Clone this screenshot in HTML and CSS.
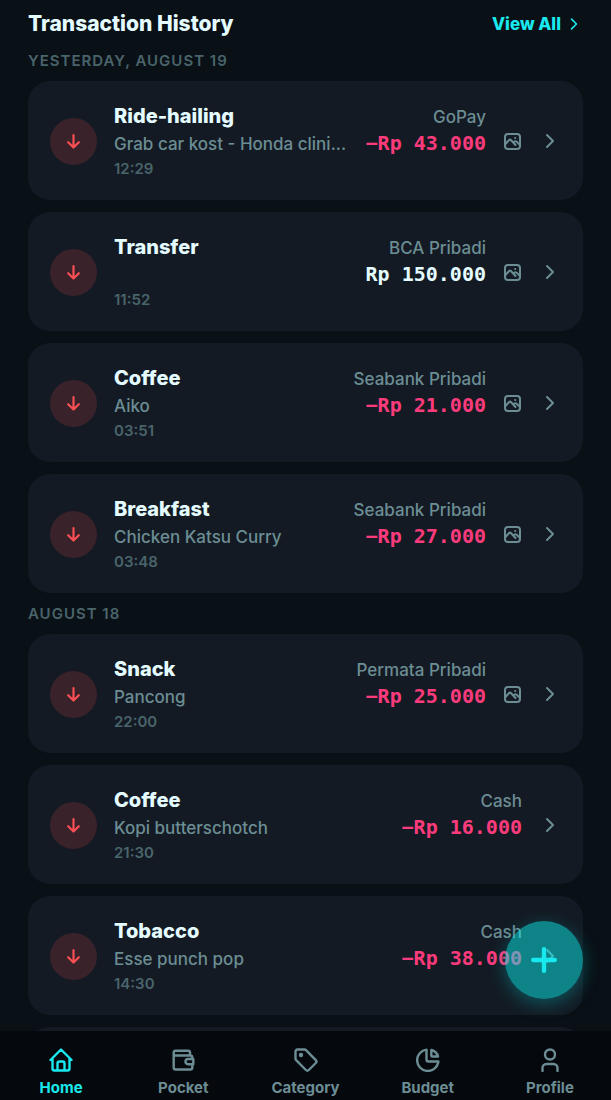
FILE: index.html
```html
<!DOCTYPE html>
<html lang="en">
<head>
  <meta charset="UTF-8" />
  <meta name="viewport" content="width=device-width, initial-scale=1.0"/>
  <title>Transaction History</title>
  <link rel="stylesheet" href="styles.css">
</head>
<body>
  <!-- Shared icons -->
  <svg class="sprite" aria-hidden="true">
    <symbol id="arrow-down" viewBox="0 0 24 24"><path d="M12 3v17M4.500 13l7.500 7.500 7.500-7.500"/></symbol>
    <symbol id="chevron" viewBox="0 0 22 22"><path d="M8 5l6 6-6 6"/></symbol>
    <symbol id="picture" viewBox="0 0 19 19">
      <rect x="2" y="2" width="15" height="15" rx="3"/>
      <path d="M2.500 12l3.600-4c.6-.6 1.200-.6 1.800 0l4.600 5M10.500 10.600l1.100-1c.6-.5 1.200-.5 1.800 0l3.100 2.900"/>
      <circle class="dot" cx="12.200" cy="6" r="1.100"/>
    </symbol>
  </svg>

  <div class="app">
    <main class="content">
      <header class="page-header">
        <h1>Transaction History</h1>
        <a class="view-all" href="#all">View All <svg><use href="#chevron"/></svg></a>
      </header>

      <section>
        <h2 class="date">Yesterday, August 19</h2>
        <ul class="list">
          <li>
            <a class="card" href="#ride-hailing">
              <span class="badge"><svg><use href="#arrow-down"/></svg></span>
              <span class="info">
                <span class="name">Ride-hailing</span>
                <span class="note">Grab car kost - Honda clini...</span>
                <span class="time">12:29</span>
              </span>
              <span class="payment">
                <span class="account">GoPay</span>
                <span class="amount expense">−Rp 43.000</span>
              </span>
              <svg class="picture"><use href="#picture"/></svg>
              <svg class="chevron"><use href="#chevron"/></svg>
            </a>
          </li>
          <li>
            <a class="card" href="#transfer">
              <span class="badge"><svg><use href="#arrow-down"/></svg></span>
              <span class="info">
                <span class="name">Transfer</span>
                <span class="note"></span>
                <span class="time">11:52</span>
              </span>
              <span class="payment">
                <span class="account">BCA Pribadi</span>
                <span class="amount">Rp 150.000</span>
              </span>
              <svg class="picture"><use href="#picture"/></svg>
              <svg class="chevron"><use href="#chevron"/></svg>
            </a>
          </li>
          <li>
            <a class="card" href="#coffee-aiko">
              <span class="badge"><svg><use href="#arrow-down"/></svg></span>
              <span class="info">
                <span class="name">Coffee</span>
                <span class="note">Aiko</span>
                <span class="time">03:51</span>
              </span>
              <span class="payment">
                <span class="account">Seabank Pribadi</span>
                <span class="amount expense">−Rp 21.000</span>
              </span>
              <svg class="picture"><use href="#picture"/></svg>
              <svg class="chevron"><use href="#chevron"/></svg>
            </a>
          </li>
          <li>
            <a class="card" href="#breakfast">
              <span class="badge"><svg><use href="#arrow-down"/></svg></span>
              <span class="info">
                <span class="name">Breakfast</span>
                <span class="note">Chicken Katsu Curry</span>
                <span class="time">03:48</span>
              </span>
              <span class="payment">
                <span class="account">Seabank Pribadi</span>
                <span class="amount expense">−Rp 27.000</span>
              </span>
              <svg class="picture"><use href="#picture"/></svg>
              <svg class="chevron"><use href="#chevron"/></svg>
            </a>
          </li>
        </ul>
      </section>

      <section>
        <h2 class="date">August 18</h2>
        <ul class="list">
          <li>
            <a class="card" href="#snack">
              <span class="badge"><svg><use href="#arrow-down"/></svg></span>
              <span class="info">
                <span class="name">Snack</span>
                <span class="note">Pancong</span>
                <span class="time">22:00</span>
              </span>
              <span class="payment">
                <span class="account">Permata Pribadi</span>
                <span class="amount expense">−Rp 25.000</span>
              </span>
              <svg class="picture"><use href="#picture"/></svg>
              <svg class="chevron"><use href="#chevron"/></svg>
            </a>
          </li>
          <li>
            <a class="card" href="#coffee-kopi">
              <span class="badge"><svg><use href="#arrow-down"/></svg></span>
              <span class="info">
                <span class="name">Coffee</span>
                <span class="note">Kopi butterschotch</span>
                <span class="time">21:30</span>
              </span>
              <span class="payment">
                <span class="account">Cash</span>
                <span class="amount expense">−Rp 16.000</span>
              </span>
              <svg class="chevron"><use href="#chevron"/></svg>
            </a>
          </li>
          <li>
            <a class="card" href="#tobacco">
              <span class="badge"><svg><use href="#arrow-down"/></svg></span>
              <span class="info">
                <span class="name">Tobacco</span>
                <span class="note">Esse punch pop</span>
                <span class="time">14:30</span>
              </span>
              <span class="payment">
                <span class="account">Cash</span>
                <span class="amount expense">−Rp 38.000</span>
              </span>
              <svg class="chevron"><use href="#chevron"/></svg>
            </a>
          </li>
          <li class="card placeholder" aria-hidden="true"></li>
        </ul>
      </section>
    </main>

    <button class="fab" type="button" aria-label="Add transaction">
      <svg viewBox="0 0 24 24"><path d="M12 2v20M2 12h20"/></svg>
    </button>

    <nav class="tabs">
      <a class="tab active" href="#home">
        <svg viewBox="0 0 24 24"><path d="M1.500 12L12 1.500 22.500 12M3.500 10.500V20.500c0 1.200.8 2 2 2h13c1.200 0 2-.8 2-2V10.500M8.500 22.500v-7c0-1.100.9-2 2-2h3c1.100 0 2 .9 2 2v7"/></svg>
        Home
      </a>
      <a class="tab" href="#pocket">
        <svg viewBox="0 0 24 24"><path d="M19 7.500V4.500c0-1-.8-1.800-1.800-1.800H4.500c-1 0-1.800.8-1.800 1.800v15c0 1.100.9 2 2 2h14.600c1.100 0 2-.9 2-2v-3.300M21.300 11V9.500c0-1.100-.9-2-2-2H2.700M22.300 11h-5.200c-1.400 0-2.600 1.200-2.600 2.600s1.200 2.600 2.600 2.600h5.200z"/></svg>
        Pocket
      </a>
      <a class="tab" href="#category">
        <svg viewBox="0 0 24 24"><path d="M1.500 3.500v7.200c0 .6.2 1.100.6 1.500l9.800 9.800c.8.8 2.100.8 2.900 0l7-7c.8-.8.8-2.100 0-2.900L12 2.100c-.4-.4-.9-.6-1.500-.6h-7c-1.100 0-2 .9-2 2z"/><circle class="dot" cx="7" cy="7" r="2.200"/></svg>
        Category
      </a>
      <a class="tab" href="#budget">
        <svg viewBox="0 0 24 24"><path d="M22.300 14.500A10.700 10.700 0 1 1 10.500 1.600V11.500c0 1.100.9 2 2 2h9.900M15.300 2v5.500c0 .6.400 1 1 1h5.700c-.8-3.200-3.400-5.600-6.700-6.500z"/></svg>
        Budget
      </a>
      <a class="tab" href="#profile">
        <svg viewBox="0 0 24 24"><circle cx="12" cy="6.500" r="5"/><path d="M4.500 23v-3c0-2.200 1.800-4 4-4h7c2.200 0 4 1.800 4 4v3"/></svg>
        Profile
      </a>
    </nav>
  </div>
</body>
</html>
```
FILE: styles.css
```css
:root {
  --bg: #091016;
  --card: #131a23;
  --tabs: #05080d;
  --text: #e4fcff;
  --muted: #6c8d94;
  --faint: #4a646b;
  --accent: #19e9ee;
  --expense: #fb3b7c;
  --red: #fc5054;
}

* {
  box-sizing: border-box;
}

body {
  margin: 0;
  background-color: var(--bg);
  color: var(--text);
  font-family: Inter, "Liberation Sans", sans-serif;
}

a {
  color: inherit;
  text-decoration: none;
}

svg {
  display: block;
  flex-shrink: 0;
  fill: none;
  stroke: currentColor;
  stroke-width: 2;
  stroke-linecap: round;
  stroke-linejoin: round;
}

.sprite {
  display: none;
}

.dot {
  fill: currentColor;
  stroke: none;
}

.app {
  position: relative;
  display: flex;
  flex-direction: column;
  height: 100vh;
}

.content {
  flex: 1;
  min-height: 0;
  padding: 0 28px;
  overflow-y: auto;
  scrollbar-width: none;
}

.page-header {
  display: flex;
  justify-content: space-between;
  align-items: center;
  padding-top: 8px;
}

h1 {
  margin: 0;
  font-size: 21px;
  font-weight: 800;
  line-height: 32px;
}

.view-all {
  display: flex;
  align-items: center;
  gap: 4px;
  color: var(--accent);
  font-size: 17px;
  font-weight: 800;
}

.view-all svg {
  width: 18px;
  height: 18px;
}

.date {
  margin: 9px 0 8px;
  color: var(--faint);
  font-size: 15px;
  font-weight: 600;
  line-height: 24px;
  letter-spacing: 1px;
  text-transform: uppercase;
}

.list {
  display: flex;
  flex-direction: column;
  gap: 12px;
  margin: 0;
  padding: 0;
  list-style: none;
}

.card {
  display: flex;
  align-items: center;
  gap: 17px;
  padding: 20px 22px 19px;
  border-radius: 22px;
  background-color: var(--card);
  color: var(--muted);
}

.placeholder {
  min-height: 119px;
}

.badge {
  display: flex;
  flex-shrink: 0;
  justify-content: center;
  align-items: center;
  width: 47px;
  height: 47px;
  border-radius: 50%;
  background-color: #3a222a;
  color: var(--red);
}

.badge svg {
  width: 17px;
  height: 17px;
  stroke-width: 3;
}

.info {
  display: flex;
  flex: 1;
  flex-direction: column;
  min-width: 0;
}

.name {
  color: var(--text);
  font-size: 20px;
  font-weight: 800;
  line-height: 31px;
}

.note {
  min-height: 25px;
  overflow: hidden;
  font-size: 17px;
  font-weight: 500;
  line-height: 25px;
  text-overflow: ellipsis;
  white-space: nowrap;
}

.time {
  color: var(--faint);
  font-size: 15px;
  font-weight: 600;
  line-height: 24px;
}

.payment {
  display: flex;
  flex-direction: column;
  align-self: flex-start;
  align-items: flex-end;
}

.account {
  font-size: 17px;
  font-weight: 500;
  line-height: 32px;
}

.amount {
  color: var(--text);
  font-family: "DejaVu Sans Mono", monospace;
  font-size: 20px;
  font-weight: 700;
  line-height: 20px;
  white-space: nowrap;
}

.expense {
  color: var(--expense);
}

.picture {
  width: 19px;
  height: 19px;
}

.chevron {
  width: 22px;
  height: 22px;
}

.fab {
  position: absolute;
  right: 28px;
  bottom: 101px;
  display: flex;
  justify-content: center;
  align-items: center;
  width: 78px;
  height: 78px;
  padding: 0;
  border: none;
  border-radius: 50%;
  background-color: rgba(10, 238, 240, 0.5);
  box-shadow: 0 5px 18px rgba(10, 200, 205, 0.35);
  color: var(--accent);
  cursor: pointer;
}

.fab svg {
  width: 26px;
  height: 26px;
  stroke-width: 4;
}

.tabs {
  display: flex;
  padding: 17px 0 1px;
  background-color: var(--tabs);
}

.tab {
  display: flex;
  flex: 1;
  flex-direction: column;
  align-items: center;
  gap: 5px;
  color: var(--muted);
  font-size: 15px;
  font-weight: 700;
  line-height: 22px;
}

.tab svg {
  width: 24px;
  height: 24px;
  stroke-width: 2.4;
}

.tab.active {
  color: var(--accent);
}
```
